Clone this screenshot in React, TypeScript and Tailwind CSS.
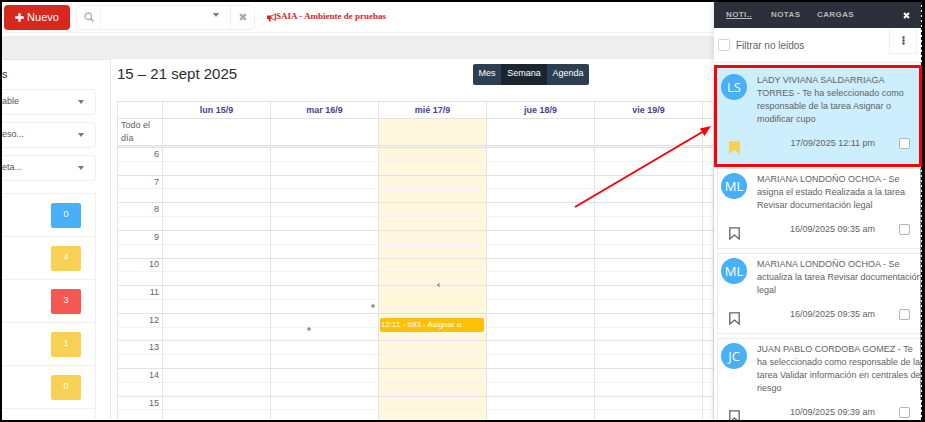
import { FaEllipsisV } from "react-icons/fa"

const filters = ["able", "eso...", "eta..."]

const counters = [
  { value: 0, color: "bg-[#48b0f7]" },
  { value: 4, color: "bg-[#f8d053]" },
  { value: 3, color: "bg-[#f55753]" },
  { value: 1, color: "bg-[#f8d053]" },
  { value: 0, color: "bg-[#f8d053]" },
]

const days = [
  { label: "lun 15/9", today: false },
  { label: "mar 16/9", today: false },
  { label: "mié 17/9", today: true },
  { label: "jue 18/9", today: false },
  { label: "vie 19/9", today: false },
  { label: "", today: false },
]

const hours = [6, 7, 8, 9, 10, 11, 12, 13, 14, 15]

const notifications = [
  {
    initials: "LS",
    text: "LADY VIVIANA SALDARRIAGA TORRES - Te ha seleccionado como responsable de la tarea Asignar o modificar cupo",
    date: "17/09/2025 12:11 pm",
    marked: true,
  },
  {
    initials: "ML",
    text: "MARIANA LONDOÑO OCHOA - Se asigna el estado Realizada a la tarea Revisar documentación legal",
    date: "16/09/2025 09:35 am",
    marked: false,
  },
  {
    initials: "ML",
    text: "MARIANA LONDOÑO OCHOA - Se actualiza la tarea Revisar documentación legal",
    date: "16/09/2025 09:35 am",
    marked: false,
  },
  {
    initials: "JC",
    text: "JUAN PABLO CORDOBA GOMEZ - Te ha seleccionado como responsable de la tarea Validar información en centrales de riesgo",
    date: "10/09/2025 09:39 am",
    marked: false,
  },
]

function Caret() {
  return (
    <svg viewBox="0 0 6 4" className="w-[6px] h-1 shrink-0" aria-hidden="true">
      <path d="M0 0h6L3 4z" fill="#777" />
    </svg>
  )
}

function Cross({ className }: { className: string }) {
  return (
    <svg viewBox="0 0 10 10" className={className} aria-hidden="true">
      <path d="M1.500 1.500L8.500 8.500M8.500 1.500L1.500 8.500" stroke="currentColor" strokeWidth="3" />
    </svg>
  )
}

function Bookmark({ filled }: { filled: boolean }) {
  return (
    <svg viewBox="0 0 11 13" className="w-[11px] h-[13px]" aria-hidden="true">
      <path
        d="M0.8 0.8H10.2V12L5.5 8 0.8 12Z"
        fill={filled ? "#f8d053" : "none"}
        stroke={filled ? "#f8d053" : "#626262"}
        strokeWidth="1.3"
      />
    </svg>
  )
}

function TopBar() {
  return (
    <header className="flex items-center h-[31px] pl-[2px] border-b border-[#f2f2f2]">
      <button className="flex items-center justify-center gap-[3px] w-[66px] h-[25px] rounded-sm bg-[#d6281c] text-white text-[11px]">
        <svg viewBox="0 0 9 9" className="w-[9px] h-[9px]" aria-hidden="true">
          <path d="M4.5 0.300V8.700M0.300 4.500H8.700" stroke="currentColor" strokeWidth="2.4" />
        </svg>
        Nuevo
      </button>
      <div className="flex ml-[6px] w-[179px] h-[25px] border border-[#f0f0f0] rounded-sm">
        <button aria-label="Buscar" className="flex items-center justify-center w-6 border-r border-[#f0f0f0]">
          <svg viewBox="0 0 10 10" className="w-[10px] h-[10px]" aria-hidden="true">
            <circle cx="4.2" cy="4.2" r="3.3" fill="none" stroke="#aaa" strokeWidth="1.3" />
            <path d="M6.6 6.6L9.4 9.4" stroke="#aaa" strokeWidth="1.6" />
          </svg>
        </button>
        <button aria-label="Seleccionar" className="flex-1 flex justify-end pt-[7px] pr-[11px]">
          <Caret />
        </button>
        <button aria-label="Limpiar" className="flex items-center justify-center w-6 border-l border-[#f0f0f0] text-[#aaa]">
          <Cross className="w-2 h-2" />
        </button>
      </div>
      <p className="flex items-center ml-[12px] font-['Liberation_Serif',serif] font-bold text-[9px] text-[#d6281c] whitespace-nowrap">
        <svg viewBox="0 0 9 9" className="w-[9px] h-[9px]" aria-hidden="true">
          <path d="M0 2.500H4.500V6H3.200L4 8.500H2.200L1.400 6H0Z" fill="currentColor" />
          <path d="M4.500 2.700C6 2.600 7 1.900 8.300 0.800V7.400C7 6.400 6 5.900 4.500 5.700" fill="none" stroke="currentColor" />
        </svg>
        SAIA - Ambiente de pruebas
      </p>
    </header>
  )
}

function Sidebar() {
  return (
    <nav className="w-[109px] shrink-0 border-t border-r border-[#e6e6e6] pr-[14px]">
      <h2 className="h-[29px] pt-2 text-[11px] leading-[13px] text-[#2c2c2c]">s</h2>
      <div className="flex flex-col gap-[7px]">
        {filters.map((filter) => (
          <button
            key={filter}
            className="flex items-center justify-between h-[26px] pr-[11px] border border-l-0 border-[#f0f0f0] rounded-r-sm text-[9px] text-[#555]"
          >
            {filter}
            <Caret />
          </button>
        ))}
      </div>
      <ul className="mt-3 border-t border-r border-[#f0f0f0]">
        {counters.map((counter, index) => (
          <li key={index} className="flex items-center justify-end h-[43px] pr-[14px] border-b border-[#f0f0f0]">
            <span className={`flex items-center justify-center w-[30px] h-[25px] rounded-xs text-[9px] text-white ${counter.color}`}>
              {counter.value}
            </span>
          </li>
        ))}
        <li className="h-[43px]" />
      </ul>
    </nav>
  )
}

function Columns() {
  return (
    <colgroup>
      <col className="w-[45px]" />
      <col className="w-[108px]" />
      <col className="w-[108px]" />
      <col className="w-[108px]" />
      <col className="w-[108px]" />
      <col className="w-[108px]" />
      <col />
    </colgroup>
  )
}

function Calendar() {
  return (
    <main className="relative flex-1 min-w-0 pl-[6px]">
      <div className="flex items-center h-[42px] pb-3">
        <h1 className="w-[356px] text-[15px] text-[#2c2c2c]">15 – 21 sept 2025</h1>
        <div className="flex h-[21px] rounded-xs overflow-hidden bg-[#2c3e50] text-[9px] text-white">
          <button className="w-7">Mes</button>
          <button className="w-[46px] bg-[#1a252f]">Semana</button>
          <button className="w-[42px]">Agenda</button>
        </div>
      </div>
      <table className="w-full table-fixed border-collapse text-[9px] text-[#626262]">
        <Columns />
        <thead>
          <tr className="h-[17px]">
            <th className="border border-[#e2e2e2] p-0" />
            {days.map((day) => (
              <th key={day.label} className="border border-[#e2e2e2] p-0 font-bold leading-[13px] text-[#4b3f8f]">
                {day.label}
              </th>
            ))}
          </tr>
        </thead>
        <tbody>
          <tr className="h-[27px]">
            <td className="border border-[#e2e2e2] p-0 pl-[3px] leading-[13px]">Todo el día</td>
            {days.map((day) => (
              <td key={day.label} className={`border border-[#e2e2e2] p-0 ${day.today ? "bg-[#fff8df]" : ""}`} />
            ))}
          </tr>
        </tbody>
      </table>
      <div className="h-px border-x border-[#e2e2e2] bg-[#f0f0f0]" />
      <table className="w-full h-[277px] table-fixed border-collapse text-[9px] text-[#626262]">
        <Columns />
        <tbody>
          {hours.flatMap((hour) => [
            <tr key={hour} className="h-[13px] border-t border-[#e2e2e2]">
              <th className="border-x border-[#e2e2e2] p-0 pr-[3px] text-right font-normal leading-[11px]">{hour}</th>
              {days.map((day) => (
                <td key={day.label} className={`relative border-x border-[#e2e2e2] p-0 ${day.today ? "bg-[#fff8df]" : ""}`}>
                  {day.today && hour === 12 && (
                    <a
                      href="#tarea-693"
                      className="absolute z-10 top-1 left-[1px] right-[2px] h-[14px] px-[1px] rounded-xs bg-[#ffc107] text-[8px] leading-[14px] text-white whitespace-nowrap overflow-hidden"
                    >
                      12:11 - 693 - Asignar o
                    </a>
                  )}
                </td>
              ))}
            </tr>,
            <tr key={`${hour}-30`} className="h-[13px] border-t border-[#f3f3f3]">
              <th className="border-x border-x-[#e2e2e2] p-0" />
              {days.map((day) => (
                <td key={day.label} className={`border-x border-x-[#e2e2e2] p-0 ${day.today ? "bg-[#fff8df]" : ""}`} />
              ))}
            </tr>,
          ])}
        </tbody>
      </table>
      {/* Loose marks over the grid */}
      <svg viewBox="0 0 134 48" className="absolute left-[196px] top-[224px] w-[134px] h-12" aria-hidden="true">
        <g fill="#bbb" stroke="#666">
          <path d="M2 44.500L3.500 46 2 47.500 0.500 46Z" />
          <path d="M66 21.500L67.500 23 66 24.500 64.500 23Z" />
          <path d="M132.500 0.500L130.500 2 132.500 3.500" />
        </g>
      </svg>
    </main>
  )
}

function NotificationPanel() {
  return (
    <aside className="relative w-[208px] shrink-0 bg-white border-r border-dashed border-black shadow-[0_0_6px_rgba(0,0,0,0.15)] z-10">
      <div className="flex items-center h-[26px] pl-3 pr-[11px] bg-[#2b303b] text-[8px] font-bold tracking-wider text-[#b5b8bd]">
        <button className="w-[45px] text-left underline">NOTI..</button>
        <button className="w-[46px] text-left">NOTAS</button>
        <button className="flex-1 text-left">CARGAS</button>
        <button aria-label="Cerrar" className="text-white">
          <Cross className="w-[7px] h-[7px]" />
        </button>
      </div>
      <div className="flex justify-between h-[35px] pl-1 pr-1 border-b border-[#ededed]">
        <label className="flex items-center gap-[6px] text-[10px] text-[#626262]">
          <input type="checkbox" className="appearance-none w-3 h-3 border border-[#d5d5d5] rounded-xs bg-white" />
          Filtrar no leidos
        </label>
        <button aria-label="Opciones" className="flex items-center justify-center w-7 h-[26px] border border-t-0 border-[#f0f0f0]">
          <FaEllipsisV className="w-[9px] h-[9px] text-[#555]" />
        </button>
      </div>
      <ul className="flex flex-col gap-1 pl-[3px] pt-[5px] text-[9px] leading-[13px] text-[#626262]">
        {notifications.map((item) => (
          <li
            key={item.text}
            className={
              item.marked
                ? "flex gap-[10px] mr-[2px] pl-1 pt-[6px] pb-[14px] bg-[#cceefd] outline-[3px] outline-[#fb0007]"
                : "flex gap-[10px] pl-[3px] pt-1 pb-3 border border-r-0 border-[#ededed]"
            }
          >
            <div className="flex flex-col justify-between items-center w-[26px] shrink-0 -mb-1">
              <span className="flex items-center justify-center w-[26px] h-[26px] rounded-full bg-[#48b0f7] font-['Open_Sans',sans-serif] text-[13px] text-white">
                {item.initials}
              </span>
              <Bookmark filled={item.marked} />
            </div>
            <div className="flex-1 min-w-0">
              <p className="-mr-1">{item.text}</p>
              <label className={`flex items-center justify-end gap-6 mt-[11px] ${item.marked ? "pr-[9px]" : "pr-[11px]"}`}>
                {item.date}
                <input type="checkbox" className="appearance-none w-[11px] h-[11px] border border-[#b5b5b9] rounded-xs bg-white" />
              </label>
            </div>
          </li>
        ))}
      </ul>
      {/* Scroll thumb */}
      <div className="absolute right-0 top-[166px] w-px h-[232px] bg-[#999]" />
    </aside>
  )
}

export default function App() {
  return (
    <div className="relative flex h-screen overflow-hidden border-2 border-r-[3px] border-black bg-white font-['Liberation_Sans',Arial,sans-serif]">
      <div className="flex-1 min-w-0">
        <TopBar />
        <div className="h-[23px] mt-[3px] bg-[#eeeeee]" />
        <div className="flex">
          <Sidebar />
          <Calendar />
        </div>
      </div>
      <NotificationPanel />
      {/* Arrow pointing at the first notification */}
      <svg viewBox="0 0 140 84" className="absolute z-20 top-[122px] right-[208px] w-[140px] h-[84px]" aria-hidden="true">
        <path d="M1 83L130 7" stroke="#fb0007" strokeWidth="2" />
        <path d="M137 2L126 4.500L130.500 12Z" fill="#fb0007" />
      </svg>
    </div>
  )
}
